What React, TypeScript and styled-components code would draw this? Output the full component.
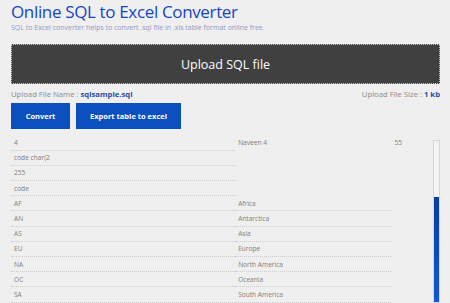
import React from "react";
import styled, { createGlobalStyle } from "styled-components";

const Global = createGlobalStyle`
  html, body { margin: 0; padding: 0; background: #efefef; }
  body { font-family: "Open Sans", "Noto Sans", sans-serif; overflow: hidden; }
`;

const Page = styled.div`
  width: 429px;
  height: 303px;
  padding-left: 11px;
  display: flex;
  flex-direction: column;
  overflow: hidden;
`;

const Title = styled.h1`
  margin: 1px 0 0 0;
  font-size: 17px;
  line-height: 22px;
  font-weight: 400;
  color: #1745c2;
  letter-spacing: -0.35px;
`;

const Subtitle = styled.p`
  margin: 0;
  font-size: 7px;
  line-height: 10px;
  color: #8d9bc7;
`;

const UploadBox = styled.div`
  margin-top: 11px;
  height: 38px;
  background: #404040;
  border: 1px dotted #cfcfcf;
  display: flex;
  align-items: center;
  justify-content: center;
  color: #fff;
  font-size: 12.5px;
  font-weight: 500;
`;

const InfoRow = styled.div`
  margin-top: 5px;
  display: flex;
  justify-content: space-between;
  font-size: 7.7px;
  line-height: 10px;
  color: #8a8a8a;
`;

const Strong = styled.b`
  color: #1f4ea8;
  font-weight: 700;
`;

const ButtonRow = styled.div`
  margin-top: 4px;
  display: flex;
  gap: 6px;
`;

const Button = styled.button<{ $w: number }>`
  width: ${(p) => p.$w}px;
  height: 26px;
  border: 0;
  padding: 0;
  background: #0b50be;
  color: #fff;
  font-family: inherit;
  font-size: 7.5px;
  font-weight: 700;
`;

const TableArea = styled.div`
  margin-top: 6px;
  flex: 1;
  display: flex;
  gap: 4px;
  min-height: 0;
`;

const Table = styled.table`
  flex: 1;
  border-collapse: collapse;
  align-self: flex-start;
  font-size: 6.6px;
  color: #7d7d7d;
`;

const Cell = styled.td<{ $w: number; $line: boolean }>`
  width: ${(p) => p.$w}px;
  height: 15.2px;
  padding: 0 0 0 3px;
  box-sizing: border-box;
  vertical-align: middle;
  border-bottom: 1px dotted ${(p) => (p.$line ? "#cdcdcd" : "transparent")};
`;

const Track = styled.div`
  width: 5px;
  margin-top: 5px;
  border: 1px solid #d6d6d6;
  background: #f4f4f4;
  display: flex;
  flex-direction: column;
`;

const Thumb = styled.div`
  margin-top: 56px;
  flex: 1;
  background: linear-gradient(#0a3e9c, #1059d6);
`;

const rows: [string, string, string][] = [
  ["4", "Naveen 4", "55"],
  ["code char(2", "", ""],
  ["255", "", ""],
  ["code", "", ""],
  ["AF", "Africa", ""],
  ["AN", "Antarctica", ""],
  ["AS", "Asia", ""],
  ["EU", "Europe", ""],
  ["NA", "North America", ""],
  ["OC", "Oceania", ""],
  ["SA", "South America", ""],
];

export default function App() {
  return (
    <>
      <Global />
      <Page>
        <Title>Online SQL to Excel Converter</Title>
        <Subtitle>SQL to Excel converter helps to convert .sql file in .xls table format online free.</Subtitle>
        <UploadBox>Upload SQL file</UploadBox>
        <InfoRow>
          <span>
            Upload File Name : <Strong>sqlsample.sql</Strong>
          </span>
          <span>
            Upload File Size : <Strong>1 kb</Strong>
          </span>
        </InfoRow>
        <ButtonRow>
          <Button $w={59}>Convert</Button>
          <Button $w={105}>Export table to excel</Button>
        </ButtonRow>
        <TableArea>
          <Table>
            <tbody>
              {rows.map((r, i) => (
                <tr key={i}>
                  <Cell $w={227} $line={true}>{r[0]}</Cell>
                  <Cell $w={158} $line={r[1] !== "" && i > 0}>{r[1]}</Cell>
                  <Cell $w={38} $line={false}>{r[2]}</Cell>
                </tr>
              ))}
            </tbody>
          </Table>
          <Track>
            <Thumb />
          </Track>
        </TableArea>
      </Page>
    </>
  );
}
